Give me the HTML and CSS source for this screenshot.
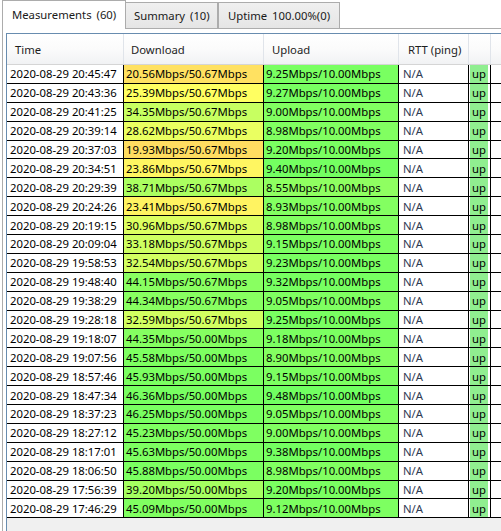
FILE: index.html
```html
<!DOCTYPE html>
<html>
<head>
<meta charset="utf-8">
<link rel="stylesheet" href="styles.css">
</head>
<body>
<div class="tabs">
  <div class="tab active">Measurements (60)</div>
  <div class="tab t-summary">Summary (10)</div>
  <div class="tab t-uptime">Uptime 100.00%(0)</div>
</div>
<div class="panel">
  <div class="grid">
    <div class="head">
      <div class="hc c-time">Time</div>
      <div class="hc c-down">Download</div>
      <div class="hc c-up">Upload</div>
      <div class="hc c-rtt">RTT (ping)</div>
      <div class="hc c-st"></div>
      <div class="hc fill"></div>
    </div>
    <div class="rows">
      <div class="row"><div class="c c-time">2020-08-29 20:45:47</div><div class="c c-down" style="--h:48.7">20.56Mbps/50.67Mbps</div><div class="c c-up" style="--h:111">9.25Mbps/10.00Mbps</div><div class="c c-rtt">N/A</div><div class="c c-st"><span class="ok">up</span></div><div class="c fill"></div></div>
      <div class="row"><div class="c c-time">2020-08-29 20:43:36</div><div class="c c-down" style="--h:60.1">25.39Mbps/50.67Mbps</div><div class="c c-up" style="--h:111.2">9.27Mbps/10.00Mbps</div><div class="c c-rtt">N/A</div><div class="c c-st"><span class="ok">up</span></div><div class="c fill"></div></div>
      <div class="row"><div class="c c-time">2020-08-29 20:41:25</div><div class="c c-down" style="--h:81.3">34.35Mbps/50.67Mbps</div><div class="c c-up" style="--h:108">9.00Mbps/10.00Mbps</div><div class="c c-rtt">N/A</div><div class="c c-st"><span class="ok">up</span></div><div class="c fill"></div></div>
      <div class="row"><div class="c c-time">2020-08-29 20:39:14</div><div class="c c-down" style="--h:67.8">28.62Mbps/50.67Mbps</div><div class="c c-up" style="--h:107.8">8.98Mbps/10.00Mbps</div><div class="c c-rtt">N/A</div><div class="c c-st"><span class="ok">up</span></div><div class="c fill"></div></div>
      <div class="row"><div class="c c-time">2020-08-29 20:37:03</div><div class="c c-down" style="--h:47.2">19.93Mbps/50.67Mbps</div><div class="c c-up" style="--h:110.4">9.20Mbps/10.00Mbps</div><div class="c c-rtt">N/A</div><div class="c c-st"><span class="ok">up</span></div><div class="c fill"></div></div>
      <div class="row"><div class="c c-time">2020-08-29 20:34:51</div><div class="c c-down" style="--h:56.5">23.86Mbps/50.67Mbps</div><div class="c c-up" style="--h:112.8">9.40Mbps/10.00Mbps</div><div class="c c-rtt">N/A</div><div class="c c-st"><span class="ok">up</span></div><div class="c fill"></div></div>
      <div class="row"><div class="c c-time">2020-08-29 20:29:39</div><div class="c c-down" style="--h:91.7">38.71Mbps/50.67Mbps</div><div class="c c-up" style="--h:102.6">8.55Mbps/10.00Mbps</div><div class="c c-rtt">N/A</div><div class="c c-st"><span class="ok">up</span></div><div class="c fill"></div></div>
      <div class="row"><div class="c c-time">2020-08-29 20:24:26</div><div class="c c-down" style="--h:55.4">23.41Mbps/50.67Mbps</div><div class="c c-up" style="--h:107.2">8.93Mbps/10.00Mbps</div><div class="c c-rtt">N/A</div><div class="c c-st"><span class="ok">up</span></div><div class="c fill"></div></div>
      <div class="row"><div class="c c-time">2020-08-29 20:19:15</div><div class="c c-down" style="--h:73.3">30.96Mbps/50.67Mbps</div><div class="c c-up" style="--h:107.8">8.98Mbps/10.00Mbps</div><div class="c c-rtt">N/A</div><div class="c c-st"><span class="ok">up</span></div><div class="c fill"></div></div>
      <div class="row"><div class="c c-time">2020-08-29 20:09:04</div><div class="c c-down" style="--h:78.6">33.18Mbps/50.67Mbps</div><div class="c c-up" style="--h:109.8">9.15Mbps/10.00Mbps</div><div class="c c-rtt">N/A</div><div class="c c-st"><span class="ok">up</span></div><div class="c fill"></div></div>
      <div class="row"><div class="c c-time">2020-08-29 19:58:53</div><div class="c c-down" style="--h:77.1">32.54Mbps/50.67Mbps</div><div class="c c-up" style="--h:110.8">9.23Mbps/10.00Mbps</div><div class="c c-rtt">N/A</div><div class="c c-st"><span class="ok">up</span></div><div class="c fill"></div></div>
      <div class="row"><div class="c c-time">2020-08-29 19:48:40</div><div class="c c-down" style="--h:104.6">44.15Mbps/50.67Mbps</div><div class="c c-up" style="--h:111.8">9.32Mbps/10.00Mbps</div><div class="c c-rtt">N/A</div><div class="c c-st"><span class="ok">up</span></div><div class="c fill"></div></div>
      <div class="row"><div class="c c-time">2020-08-29 19:38:29</div><div class="c c-down" style="--h:105">44.34Mbps/50.67Mbps</div><div class="c c-up" style="--h:108.6">9.05Mbps/10.00Mbps</div><div class="c c-rtt">N/A</div><div class="c c-st"><span class="ok">up</span></div><div class="c fill"></div></div>
      <div class="row"><div class="c c-time">2020-08-29 19:28:18</div><div class="c c-down" style="--h:77.2">32.59Mbps/50.67Mbps</div><div class="c c-up" style="--h:111">9.25Mbps/10.00Mbps</div><div class="c c-rtt">N/A</div><div class="c c-st"><span class="ok">up</span></div><div class="c fill"></div></div>
      <div class="row"><div class="c c-time">2020-08-29 19:18:07</div><div class="c c-down" style="--h:106.4">44.35Mbps/50.00Mbps</div><div class="c c-up" style="--h:110.2">9.18Mbps/10.00Mbps</div><div class="c c-rtt">N/A</div><div class="c c-st"><span class="ok">up</span></div><div class="c fill"></div></div>
      <div class="row"><div class="c c-time">2020-08-29 19:07:56</div><div class="c c-down" style="--h:109.4">45.58Mbps/50.00Mbps</div><div class="c c-up" style="--h:106.8">8.90Mbps/10.00Mbps</div><div class="c c-rtt">N/A</div><div class="c c-st"><span class="ok">up</span></div><div class="c fill"></div></div>
      <div class="row"><div class="c c-time">2020-08-29 18:57:46</div><div class="c c-down" style="--h:110.2">45.93Mbps/50.00Mbps</div><div class="c c-up" style="--h:109.8">9.15Mbps/10.00Mbps</div><div class="c c-rtt">N/A</div><div class="c c-st"><span class="ok">up</span></div><div class="c fill"></div></div>
      <div class="row"><div class="c c-time">2020-08-29 18:47:34</div><div class="c c-down" style="--h:111.3">46.36Mbps/50.00Mbps</div><div class="c c-up" style="--h:113.8">9.48Mbps/10.00Mbps</div><div class="c c-rtt">N/A</div><div class="c c-st"><span class="ok">up</span></div><div class="c fill"></div></div>
      <div class="row"><div class="c c-time">2020-08-29 18:37:23</div><div class="c c-down" style="--h:111">46.25Mbps/50.00Mbps</div><div class="c c-up" style="--h:108.6">9.05Mbps/10.00Mbps</div><div class="c c-rtt">N/A</div><div class="c c-st"><span class="ok">up</span></div><div class="c fill"></div></div>
      <div class="row"><div class="c c-time">2020-08-29 18:27:12</div><div class="c c-down" style="--h:108.6">45.23Mbps/50.00Mbps</div><div class="c c-up" style="--h:108">9.00Mbps/10.00Mbps</div><div class="c c-rtt">N/A</div><div class="c c-st"><span class="ok">up</span></div><div class="c fill"></div></div>
      <div class="row"><div class="c c-time">2020-08-29 18:17:01</div><div class="c c-down" style="--h:109.5">45.63Mbps/50.00Mbps</div><div class="c c-up" style="--h:112.6">9.38Mbps/10.00Mbps</div><div class="c c-rtt">N/A</div><div class="c c-st"><span class="ok">up</span></div><div class="c fill"></div></div>
      <div class="row"><div class="c c-time">2020-08-29 18:06:50</div><div class="c c-down" style="--h:110.1">45.88Mbps/50.00Mbps</div><div class="c c-up" style="--h:107.8">8.98Mbps/10.00Mbps</div><div class="c c-rtt">N/A</div><div class="c c-st"><span class="ok">up</span></div><div class="c fill"></div></div>
      <div class="row"><div class="c c-time">2020-08-29 17:56:39</div><div class="c c-down" style="--h:94.1">39.20Mbps/50.00Mbps</div><div class="c c-up" style="--h:110.4">9.20Mbps/10.00Mbps</div><div class="c c-rtt">N/A</div><div class="c c-st"><span class="ok">up</span></div><div class="c fill"></div></div>
      <div class="row"><div class="c c-time">2020-08-29 17:46:29</div><div class="c c-down" style="--h:108.2">45.09Mbps/50.00Mbps</div><div class="c c-up" style="--h:109.4">9.12Mbps/10.00Mbps</div><div class="c c-rtt">N/A</div><div class="c c-st"><span class="ok">up</span></div><div class="c fill"></div></div>
    </div>
  </div>
</div>
</body>
</html>
```
FILE: styles.css
```css
html, body {
  margin: 0;
  padding: 0;
  background: #ffffff;
  overflow: hidden;
}
body {
  width: 501px;
  height: 531px;
  font-family: "Noto Sans", "Open Sans", sans-serif;
  font-size: 11.3px;
  color: #111;
  display: flex;
  flex-direction: column;
}
.tabs {
  display: flex;
  align-items: flex-end;
  height: 28px;
  padding-left: 2px;
  flex: none;
}
.tab {
  box-sizing: border-box;
  height: 26px;
  border: 1px solid #acacac;
  border-bottom: none;
  background: linear-gradient(#f0f0f0, #e5e5e5);
  display: flex;
  align-items: center;
  word-spacing: 2px;
  color: #1a1a1a;
  white-space: nowrap;
}
.tab.active {
  width: 124px;
  height: 29px;
  margin-bottom: -1px;
  background: #ffffff;
  padding-left: 9px;
  position: relative;
  z-index: 1;
  padding-bottom: 1px;
}
.t-summary {
  width: 93px;
  margin-left: -1px;
  padding-left: 8px;
}
.t-uptime {
  width: 122px;
  padding-left: 9px;
}
.panel {
  flex: 1;
  margin-left: 2px;
  border-left: 1px solid #acacac;
  border-top: 1px solid #acacac;
  padding: 4px 0 0 3px;
  display: flex;
  flex-direction: column;
  min-height: 0;
  overflow: hidden;
}
.grid {
  flex: 1;
  border-left: 1px solid #688caf;
  border-top: 1px solid #688caf;
  background: #f0f0f0;
  display: flex;
  flex-direction: column;
}
.head {
  display: flex;
  box-sizing: border-box;
  height: 31px;
  border-bottom: 1px solid #d5d5d5;
  background: linear-gradient(#ffffff 0%, #fbfbfb 50%, #f1f2f4 100%);
}
.hc {
  box-sizing: border-box;
  border-right: 1px solid #e0e4ea;
  display: flex;
  align-items: center;
  padding-left: 8px;
  color: #1e1e1e;
  white-space: nowrap;
}
.hc.c-down { padding-left: 7px; }
.hc.c-rtt { padding-left: 9px; }
.c-time { width: 117px; flex: none; }
.c-down { width: 140px; flex: none; }
.c-up { width: 135px; flex: none; }
.c-rtt { width: 70px; flex: none; }
.c-st { width: 22px; flex: none; }
.fill { flex: 1; border-right: none; }
.rows {
  display: flex;
  flex-direction: column;
}
.row {
  display: flex;
  box-sizing: border-box;
  height: 18.9px;
  border-bottom: 1px solid #000;
  background: #ffffff;
}
.c {
  box-sizing: border-box;
  border-right: 1px solid #000;
  display: flex;
  align-items: center;
  white-space: nowrap;
  color: #000;
}
.c.c-time { padding-left: 3px; }
.c.c-down, .c.c-up {
  padding-left: 2px;
  background: hsl(var(--h) 100% 69%);
}
.c.c-rtt { padding-left: 4px; color: #2e3a52; }
.c.c-st { padding-left: 1px; align-items: stretch; }
.c.fill { border-right: none; }
.ok {
  background: #90ee90;
  padding: 0 2px;
  display: flex;
  align-items: center;
}
```
